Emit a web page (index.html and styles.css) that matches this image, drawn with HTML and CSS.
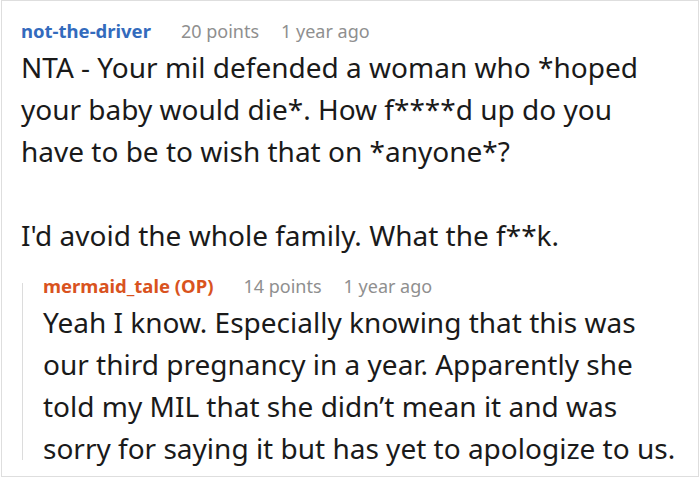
FILE: index.html
```html
<!DOCTYPE html>
<html>
<head>
<meta charset="utf-8">
<link rel="stylesheet" href="styles.css">
</head>
<body>
<div class="thread">
  <div class="comment">
    <div class="meta">
      <span class="author">not-the-driver</span>
      <span class="info">20 points</span>
      <span class="info">1 year ago</span>
    </div>
    <div class="body">
      <p>NTA - Your mil defended a woman who *hoped your baby would die*. How f****d up do you have to be to wish that on *anyone*?</p>
      <p>I'd avoid the whole family. What the f**k.</p>
    </div>
    <div class="reply">
      <div class="rail"></div>
      <div class="reply-content">
        <div class="meta">
          <span class="author op">mermaid_tale (OP)</span>
          <span class="info">14 points</span>
          <span class="info">1 year ago</span>
        </div>
        <div class="body reply-body">
          <p>Yeah I know. Especially knowing that this was our third pregnancy in a year. Apparently she told my MIL that she didn’t mean it and was sorry for saying it but has yet to apologize to us.</p>
        </div>
      </div>
    </div>
  </div>
</div>
</body>
</html>
```

FILE: styles.css
```css
html, body {
  margin: 0;
  padding: 0;
  background: #fff;
}
body {
  font-family: "Noto Sans", "Open Sans", sans-serif;
  color: #1a1a1a;
}
.thread {
  box-sizing: border-box;
  width: 698px;
  height: 477px;
  margin-left: 1px;
  border: 1px solid #dedede;
  overflow: hidden;
}
.comment {
  padding: 18px 22px 0 19px;
}
.meta {
  display: flex;
  gap: 22px;
  font-size: 18.5px;
  line-height: 24px;
}
.author {
  color: #336bbd;
  font-weight: 700;
  margin-right: 8px;
}
.author.op {
  color: #d9531e;
}
.info {
  color: #8f8f8f;
  font-size: 18px;
}
.body {
  font-size: 28px;
  line-height: 42px;
  margin-top: 3px;
}
.body p {
  margin: 0 0 42px 0;
}
.body p:last-child {
  margin-bottom: 0;
}
.reply {
  display: flex;
  margin-top: 18px;
}
.rail {
  width: 1px;
  background: #dcdcdc;
  margin: 9px 20px 9px 1px;
  flex: none;
}
.reply-content {
  flex: 1;
  min-width: 0;
}
.reply-body {
  margin-top: 3px;
}
```
